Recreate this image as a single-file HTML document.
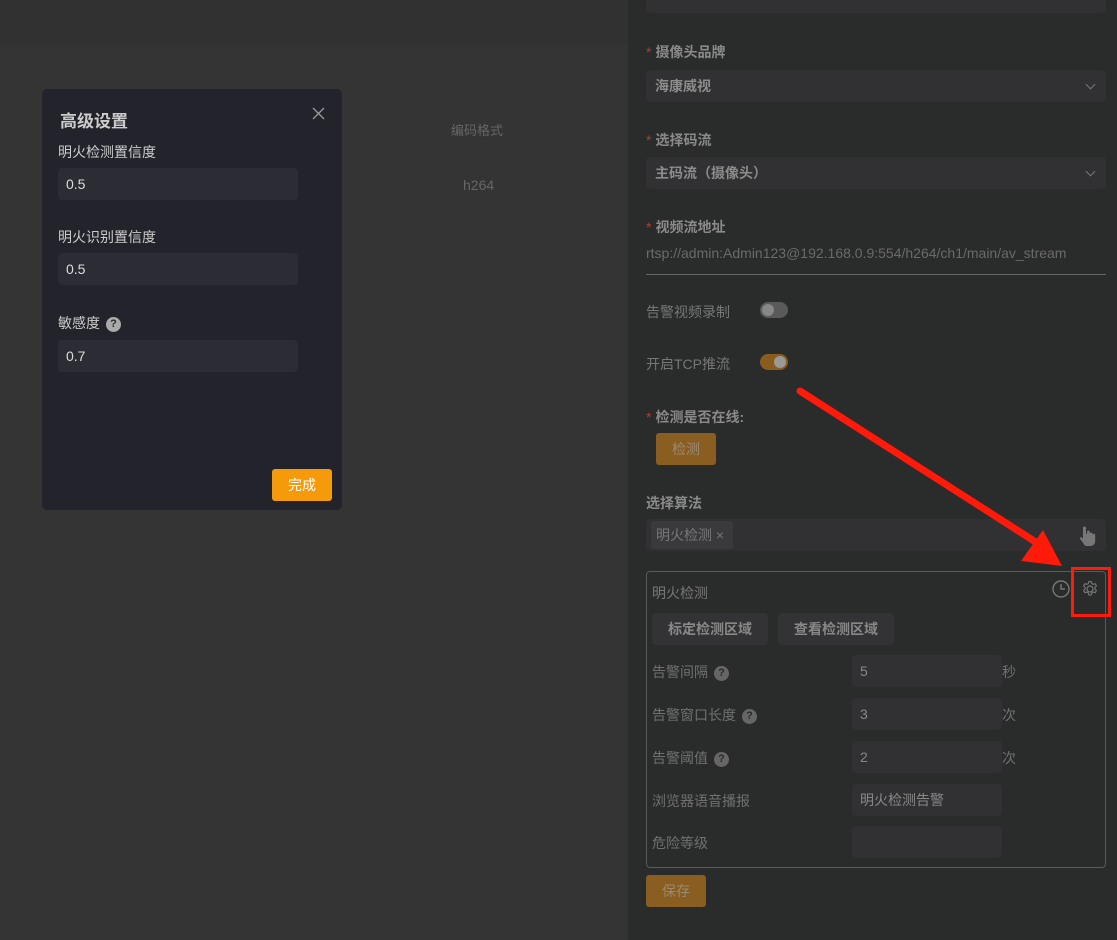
<!DOCTYPE html>
<html><head><meta charset="utf-8"><style>
*{box-sizing:border-box;margin:0;padding:0}
body{width:1117px;height:940px;overflow:hidden;background:#343434;font-family:"Liberation Sans","Noto Sans CJK SC",sans-serif;font-size:14px;position:relative;color:#888}
.a{position:absolute}
.topband{left:0;top:0;width:628px;height:45px;background:#313131}
.right{left:628px;top:0;width:489px;height:940px;background:#2a2b2b}
.lbl{position:absolute;left:646px;font-size:14px;color:#8a8a8a;font-weight:bold}
.star{color:#a0453a;font-weight:normal;margin-right:4px}
.sel{position:absolute;left:646px;width:460px;height:32px;background:#313134;border-radius:4px;color:#8c8c8c;padding-left:9px;line-height:32px;font-weight:bold}
.chev{position:absolute;right:12px;top:11px;width:7px;height:7px;border-right:1.5px solid #777;border-bottom:1.5px solid #777;transform:rotate(45deg)}
.modal{left:42px;top:89px;width:300px;height:421px;background:#22232b;border-radius:5px}
.mi{position:absolute;left:16px;width:240px;height:32px;background:#2b2c34;border-radius:4px;color:#ddd;font-size:14px;padding-left:8px;line-height:32px}
.ml{position:absolute;left:16px;color:#ccc;font-size:14px}
.q{display:inline-block;width:15px;height:15px;border-radius:50%;background:#888;color:#2a2b2b;font-size:11px;font-weight:bold;text-align:center;line-height:15px;vertical-align:1px;margin-left:6px}
.q2{background:#666;color:#2b2b2b}
.inp{position:absolute;left:852px;width:150px;height:32px;background:#313134;border-radius:4px;color:#888;padding-left:8px;line-height:32px}
.fl{position:absolute;left:652px;color:#707070}
.unit{position:absolute;left:1002px;color:#707070}
.toggle{position:absolute;left:760px;width:28px;height:16px;border-radius:8px}
.toggle i{position:absolute;top:2px;width:12px;height:12px;border-radius:50%;background:#888}
</style></head><body>
<div class="a topband"></div>
<div class="a" style="left:451px;top:120px;color:#666;font-size:13px">编码格式</div>
<div class="a" style="left:463px;top:177px;color:#666;font-size:14px">h264</div>

<div class="a modal">
  <div class="a" style="left:18px;top:18px;font-size:17px;font-weight:bold;color:#ccc">高级设置</div>
  <svg class="a" style="left:270px;top:18px" width="13" height="13"><path d="M1 1L12 12M12 1L1 12" stroke="#999" stroke-width="1.3"/></svg>
  <div class="ml" style="top:53px">明火检测置信度</div>
  <div class="mi" style="top:79px">0.5</div>
  <div class="ml" style="top:138px">明火识别置信度</div>
  <div class="mi" style="top:164px">0.5</div>
  <div class="ml" style="top:224px">敏感度<span class="q" style="background:#aaa">?</span></div>
  <div class="mi" style="top:251px">0.7</div>
  <div class="a" style="left:230px;top:380px;width:60px;height:32px;background:#f59a0b;border-radius:3px;color:#fff;text-align:center;line-height:32px;font-size:14px">完成</div>
</div>

<div class="a right"></div>
<div class="a" style="left:646px;top:0;width:460px;height:13px;background:#313134;border-radius:0 0 4px 4px"></div>
<div class="lbl" style="top:42px"><span class="star">*</span>摄像头品牌</div>
<div class="sel" style="top:70px">海康威视<span class="chev"></span></div>
<div class="lbl" style="top:130px"><span class="star">*</span>选择码流</div>
<div class="sel" style="top:157px">主码流（摄像头）<span class="chev"></span></div>
<div class="lbl" style="top:217px"><span class="star">*</span>视频流地址</div>
<div class="a" style="left:646px;top:245px;color:#6a6a6a;font-size:14px">rtsp://admin:Admin123@192.168.0.9:554/h264/ch1/main/av_stream</div>
<div class="a" style="left:646px;top:274px;width:460px;height:1px;background:#666"></div>
<div class="a" style="left:646px;top:302px;color:#777">告警视频录制</div>
<div class="toggle" style="top:302px;background:#5a5a5a"><i style="left:2px"></i></div>
<div class="a" style="left:646px;top:354px;color:#777">开启TCP推流</div>
<div class="toggle" style="top:354px;background:#8a5d1e"><i style="left:14px;background:#999"></i></div>
<div class="lbl" style="top:407px"><span class="star">*</span>检测是否在线:</div>
<div class="a" style="left:656px;top:433px;width:60px;height:32px;background:#8a5d21;border-radius:3px;color:#9a8a70;text-align:center;line-height:32px">检测</div>
<div class="lbl" style="top:493px">选择算法</div>
<div class="a" style="left:646px;top:519px;width:460px;height:32px;background:#313134;border-radius:4px"></div>
<div class="a" style="left:651px;top:521px;width:82px;height:28px;background:#3a3a3d;border-radius:3px;color:#777;line-height:28px;padding-left:5px">明火检测 ×</div>
<svg class="a" style="left:1078px;top:526px" width="18" height="20" viewBox="0 0 18 20"><path d="M5 2a1.5 1.5 0 0 1 3 0v6h1v-2a1.4 1.4 0 0 1 2.8 0v2a1.4 1.4 0 0 1 2.8 0v1a1.3 1.3 0 0 1 2.6 0v6c0 3-2 5-5 5h-3c-2 0-3-1-4-3l-3-4c-.8-1 .6-2.4 1.6-1.6L5 13z" fill="#777"/></svg>

<div class="a" style="left:646px;top:571px;width:460px;height:297px;border:1px solid #5a5a5a;border-radius:4px"></div>
<div class="a" style="left:652px;top:583px;color:#777">明火检测</div>
<svg class="a" style="left:1052px;top:580px" width="18" height="18"><circle cx="9" cy="9" r="8" fill="none" stroke="#777" stroke-width="1.4"/><path d="M9 4v5h4" fill="none" stroke="#777" stroke-width="1.4"/></svg>
<svg class="a" style="left:1081px;top:580px" width="18" height="18" viewBox="0 0 24 24"><path d="M12 8a4 4 0 1 0 0 8a4 4 0 1 0 0-8z" fill="none" stroke="#777" stroke-width="1.6"/><path d="M10.3 2h3.4l.6 2.7 2 1.1 2.6-.9 1.7 2.9-2 1.9v2.4l2 1.9-1.7 2.9-2.6-.9-2 1.1-.6 2.8h-3.4l-.6-2.8-2-1.1-2.6.9-1.7-2.9 2-1.9V9.7l-2-1.9 1.7-2.9 2.6.9 2-1.1z" fill="none" stroke="#777" stroke-width="1.5" stroke-linejoin="round"/></svg>
<div class="a" style="left:652px;top:613px;width:116px;height:32px;background:#333336;border-radius:4px;color:#888;text-align:center;line-height:32px;font-weight:bold">标定检测区域</div>
<div class="a" style="left:778px;top:613px;width:116px;height:32px;background:#333336;border-radius:4px;color:#888;text-align:center;line-height:32px;font-weight:bold">查看检测区域</div>
<div class="fl" style="top:662px">告警间隔<span class="q q2">?</span></div>
<div class="inp" style="top:655px">5</div><div class="unit" style="top:662px">秒</div>
<div class="fl" style="top:705px">告警窗口长度<span class="q q2">?</span></div>
<div class="inp" style="top:698px">3</div><div class="unit" style="top:705px">次</div>
<div class="fl" style="top:748px">告警阈值<span class="q q2">?</span></div>
<div class="inp" style="top:741px">2</div><div class="unit" style="top:748px">次</div>
<div class="fl" style="top:791px">浏览器语音播报</div>
<div class="inp" style="top:784px">明火检测告警</div>
<div class="fl" style="top:833px">危险等级</div>
<div class="inp" style="top:826px"></div>
<div class="a" style="left:646px;top:875px;width:60px;height:32px;background:#8a5d21;border-radius:3px;color:#9a8a70;text-align:center;line-height:32px">保存</div>

<svg class="a" style="left:0;top:0" width="1117" height="940">
<line x1="800" y1="391" x2="1045" y2="548" stroke="#ff1a0a" stroke-width="7" stroke-linecap="round"/>
<polygon points="1062,566 1021,561 1043,530" fill="#ff1a0a"/>
<rect x="1072.5" y="568.5" width="37" height="47" fill="none" stroke="#ff1a0a" stroke-width="3"/>
</svg>
</body></html>
